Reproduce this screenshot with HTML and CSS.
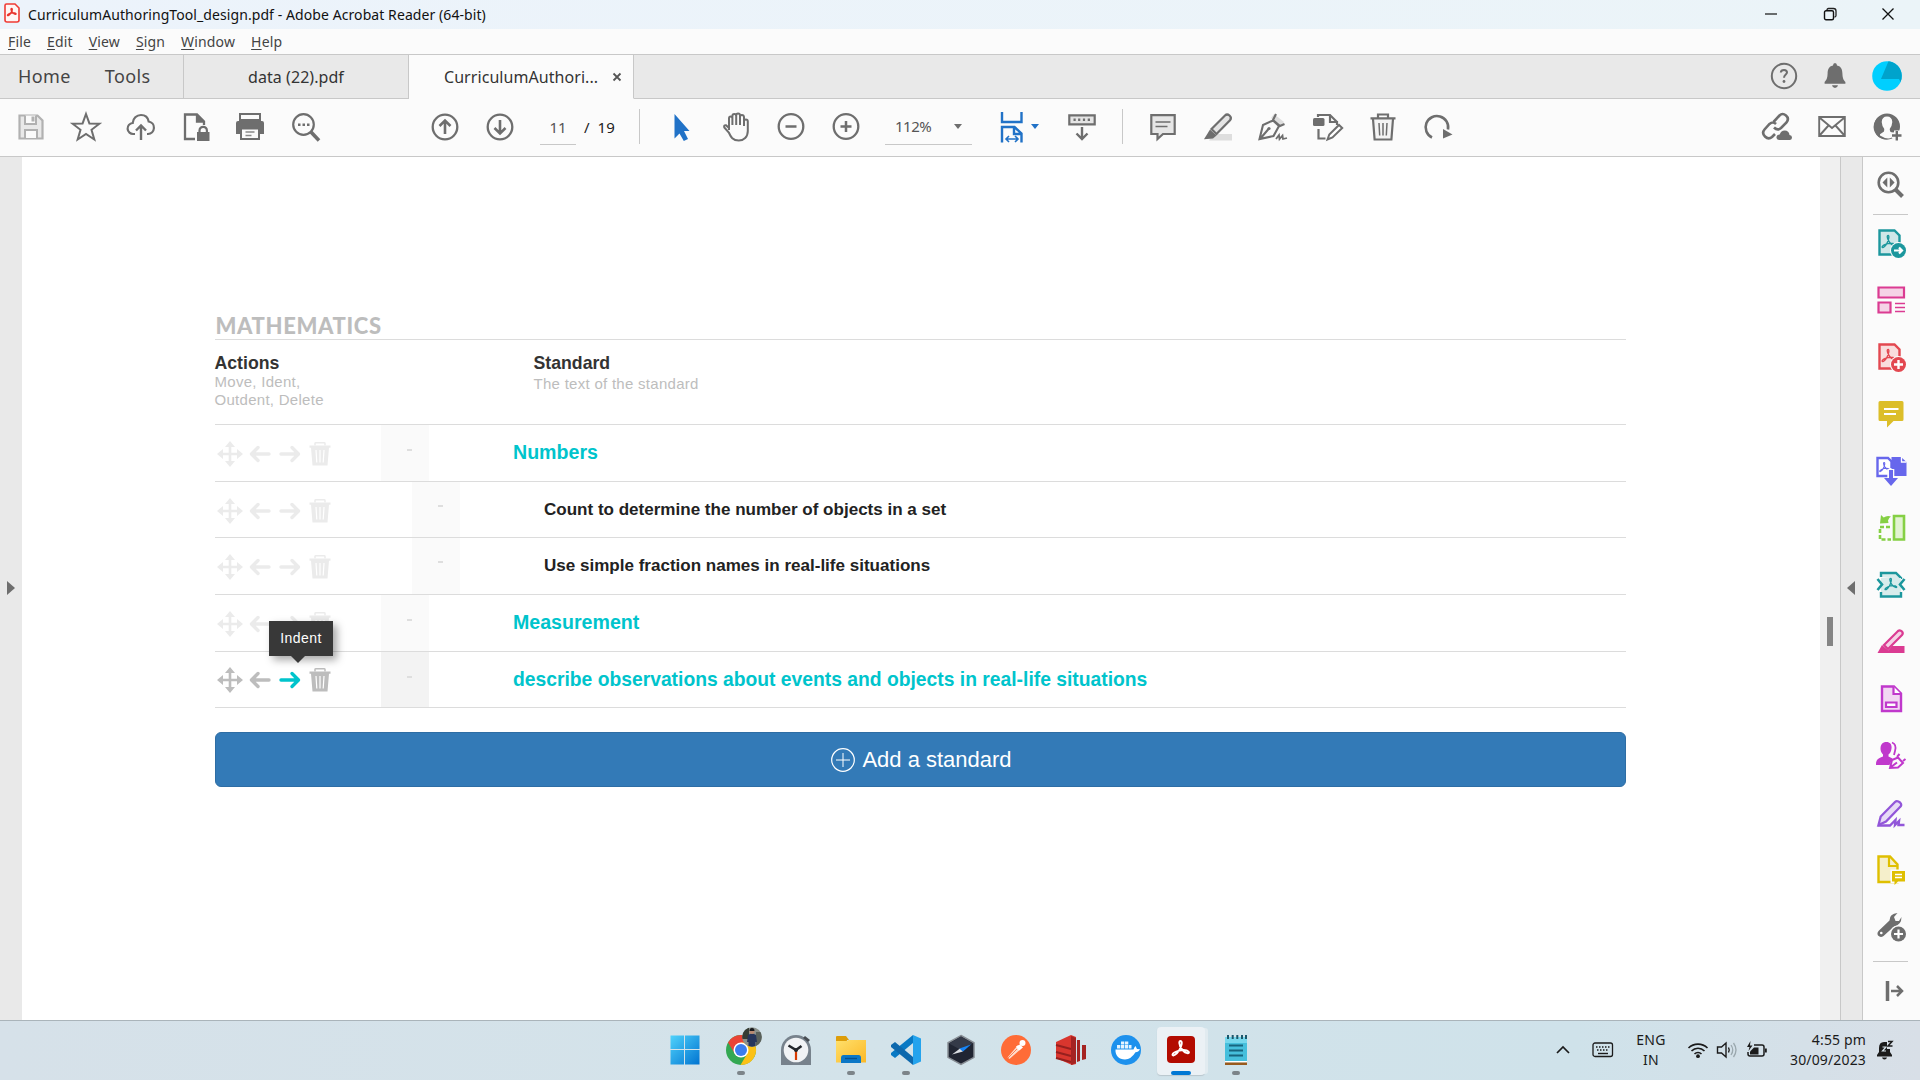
FILE: index.html
```html
<!DOCTYPE html>
<html lang="en">
<head>
    <meta charset="UTF-8">
    <meta name="viewport" content="width=device-width, initial-scale=1.0">
    <title>CurriculumAuthoringTool_design.pdf - Adobe Acrobat Reader (64-bit)</title>
    <link rel="stylesheet" href="styles.css">
</head>
<body>
    <!-- Shared shapes -->
    <svg class="defs" width="0" height="0">
        <defs>
            <symbol id="i-move" viewBox="0 0 26 26"><path d="M13 0l5 6h-3.7v5.7H20V8l6 5-6 5v-3.7h-5.7V20H18l-5 6-5-6h3.7v-5.7H6V18l-6-5 6-5v3.700h5.700V6H8z" fill="currentColor"/></symbol>
            <symbol id="i-left" viewBox="0 0 22 18"><path d="M20 9H3M9 2.500L2.500 9 9 15.500" fill="none" stroke="currentColor" stroke-width="3.400" stroke-linecap="round" stroke-linejoin="round"/></symbol>
            <symbol id="i-right" viewBox="0 0 22 18"><path d="M2 9h17M13 2.500L19.500 9 13 15.500" fill="none" stroke="currentColor" stroke-width="3.400" stroke-linecap="round" stroke-linejoin="round"/></symbol>
            <symbol id="i-bin" viewBox="0 0 22 24"><path d="M6 3.500V1.500Q6 .8 7 .8h8q1 0 1 .7v2" fill="none" stroke="currentColor" stroke-width="1.500"/><path d="M.5 3.500h21v2.300H20L18.500 23.500h-15L2 5.800H.5z" fill="currentColor"/><path d="M7 8l.8 12.500M11 8v12.500M15 8l-.8 12.500" stroke="#fff" stroke-width="1.200"/></symbol>
            <symbol id="i-pdf" viewBox="0 0 20 20"><path d="M9.500 3c2 0 .5 6-1.500 9.500-2 3.500-5 5.500-5.500 4.300C2 15 8 12 12.500 12c5 0 5.500 2.500 3.800 2.600C13 14.600 8.500 8 8.500 4.500Q8.500 3 9.500 3z" fill="none" stroke="currentColor" stroke-width="1.600"/></symbol>
        </defs>
    </svg>

    <!-- Title bar -->
    <div class="titlebar">
        <svg class="app-icon" width="16" height="20" viewBox="0 0 16 20"><path d="M2.500 1h8.500l4 4v12q0 2-2 2H3q-2 0-2-2V2.500Q1 1 2.500 1z" fill="#fff5f4" stroke="#ef3b35" stroke-width="1.600"/><path d="M7.500 5.500c1.500 0 .5 3-1 5s-2.500 2.500-3 1.800S6 9.800 9 9.800s3.800 1.400 2.500 1.500C10 11.500 7 8 7 6.300q0-.8.5-.8z" fill="none" stroke="#e8332d" stroke-width="1.400"/></svg>
        <span class="title-text">CurriculumAuthoringTool_design.pdf - Adobe Acrobat Reader (64-bit)</span>
        <div class="window-buttons">
            <svg width="14" height="14" viewBox="0 0 14 14"><path d="M1 7h12" stroke="#111" stroke-width="1.200"/></svg>
            <svg width="14" height="14" viewBox="0 0 14 14"><path d="M4 3.500V3q0-1.500 1.500-1.500h5q2.500 0 2.500 2.500v4.500q0 1.500-1.500 1.500" fill="none" stroke="#222" stroke-width="1.300"/><rect x="1.500" y="3.800" width="9" height="9" rx="1.500" fill="none" stroke="#111" stroke-width="1.400"/></svg>
            <svg width="14" height="14" viewBox="0 0 14 14"><path d="M1.500 1.500l11 11M12.500 1.500l-11 11" stroke="#111" stroke-width="1.300"/></svg>
        </div>
    </div>

    <!-- Menu bar -->
    <div class="menubar">
        <span><u>F</u>ile</span>
        <span><u>E</u>dit</span>
        <span><u>V</u>iew</span>
        <span><u>S</u>ign</span>
        <span><u>W</u>indow</span>
        <span><u>H</u>elp</span>
    </div>

    <!-- Tabs -->
    <div class="tabs">
        <div class="nav"><span class="home">Home</span><span class="tools">Tools</span></div>
        <div class="tab"><span class="tab-label">data (22).pdf</span></div>
        <div class="tab active">
            <span class="tab-label">CurriculumAuthori...</span>
            <svg class="tab-close" width="8" height="8" viewBox="0 0 8 8"><path d="M.5.5l7 7M7.500.5l-7 7" stroke="#555" stroke-width="1.800"/></svg>
        </div>
        <div class="account">
            <svg width="28" height="28" viewBox="0 0 28 28"><circle cx="14" cy="14" r="12.200" fill="none" stroke="#6e6e6e" stroke-width="2"/><path d="M10.800 10.500Q11 8 14 8t3 2.600c0 2-3 2.200-3 5.200" fill="none" stroke="#6e6e6e" stroke-width="2"/><circle cx="14" cy="19.500" r="1.400" fill="#6e6e6e"/></svg>
            <svg width="22" height="26" viewBox="0 0 22 26"><path d="M11 0q2 0 2 2.500c4.500 1 5.200 4 5.400 8 .2 5 1.200 6.500 3 8.500v1.700H.6V19c1.800-2 2.800-3.500 3-8.500.2-4 .9-7 5.400-8Q9 0 11 0zM8 22.300h6Q13.500 25 11 25t-3-2.700z" fill="#6e6e6e"/></svg>
            <svg width="30" height="30" viewBox="0 0 30 30"><circle cx="15" cy="15" r="14.800" fill="#00cfff"/><path d="M16.500.3A14.800 14.800 0 0 1 28.500 21L27 18H9z" fill="#00a3cc"/></svg>
        </div>
    </div>

    <!-- Toolbar -->
    <div class="toolbar">
        <div class="group file-tools">
            <svg viewBox="0 0 30 30"><path d="M3.500 3.500h18l5 5v18h-23z" fill="#e9e9e9" stroke="#b1b1b1" stroke-width="2.200"/><path d="M9 3.500v8.500h11V3.500M9 26v-8h12v8" fill="#fbfbfb" stroke="#b1b1b1" stroke-width="2"/><path d="M15.500 4.500h3v5h-3z" fill="#b1b1b1"/></svg>
            <svg viewBox="0 0 30 30"><path d="M15 2l3.400 9.400 10 .3-7.900 6.100 2.800 9.700L15 21.900l-8.300 5.600 2.800-9.700-7.900-6.100 10-.3z" fill="none" stroke="#6e6e6e" stroke-width="2"/></svg>
            <svg viewBox="0 0 30 30"><path d="M9 22H7.500a5.500 5.500 0 0 1-.8-11C7 6.500 10.500 3 15 3c4 0 7 2.600 7.700 6.500A6.300 6.300 0 0 1 22 22h-1" fill="none" stroke="#6e6e6e" stroke-width="2.200"/><path d="M15 28V14M10 18.500l5-5 5 5" fill="none" stroke="#6e6e6e" stroke-width="2.400"/></svg>
            <svg viewBox="0 0 30 30"><path d="M14 27H4V2.500h12l7 7V13M16 2.500v7h7" fill="none" stroke="#6e6e6e" stroke-width="2.300"/><path d="M16 2.500l7 7h-7z" fill="#6e6e6e"/><path d="M16 20h12.500v9H16z" fill="#6e6e6e"/><path d="M18.500 21v-2.500a3.700 3.700 0 0 1 7.400 0V21" fill="none" stroke="#6e6e6e" stroke-width="2.200"/></svg>
            <svg viewBox="1 0 30 30"><path d="M5 2h20v6H5z" fill="#fbfbfb" stroke="#6e6e6e" stroke-width="2"/><path d="M3 9h24q2 0 2 2v11h-4v-5H5v5H1V11q0-2 2-2z" fill="#6e6e6e"/><path d="M6 16.500h18V27H6z" fill="#fbfbfb" stroke="#6e6e6e" stroke-width="2"/><path d="M10.500 20h9M10.500 23.500h6" stroke="#8a8a8a" stroke-width="1.700"/></svg>
            <svg viewBox="0 0 30 30"><circle cx="12.500" cy="12.500" r="10.300" fill="none" stroke="#6e6e6e" stroke-width="2.200"/><path d="M20 20l8 8.500" stroke="#6e6e6e" stroke-width="3.600"/><path d="M7 11.500h2.500v2.500H7zM11.500 11.500H14v2.500h-2.500zM16 11.500h2.500v2.500H16z" fill="#6e6e6e"/></svg>
        </div>
        <div class="group page-tools">
            <svg viewBox="0 0 30 30"><circle cx="15" cy="15" r="12.300" fill="none" stroke="#6e6e6e" stroke-width="2.300"/><path d="M15 22V9M9.500 14L15 8.500l5.500 5.500" fill="none" stroke="#6e6e6e" stroke-width="2.600"/></svg>
            <svg viewBox="0 0 30 30"><circle cx="15" cy="15" r="12.300" fill="none" stroke="#6e6e6e" stroke-width="2.300"/><path d="M15 8v13M9.500 16l5.500 5.500 5.500-5.500" fill="none" stroke="#6e6e6e" stroke-width="2.600"/></svg>
        </div>
        <div class="page-number"><span class="current">11</span><span class="slash">/</span><span>19</span></div>
        <div class="divider"></div>
        <div class="group view-tools">
            <svg viewBox="0 0 30 30"><path d="M8.500 2v24.500l5-5 4.300 7.500 4.200-2-4-8h5.500z" fill="#2172c7"/></svg>
            <svg viewBox="0 0 30 30"><path d="M8 18V6.500q0-2 1.700-2t1.700 2V13 4q0-2 1.900-2t1.900 2v9V3.500q0-2 1.900-2t1.900 2V13 5q0-2 1.900-2T23 5v9-4.500q0-2 1.900-2t1.900 2V19c0 6-4 9.500-9 9.500-6 0-8-3.500-10-8l-4.500-5Q2.500 13 5 13.200L8 16" fill="none" stroke="#6e6e6e" stroke-width="2"/></svg>
            <svg viewBox="0 0 30 30"><circle cx="15" cy="14.500" r="12.300" fill="none" stroke="#6e6e6e" stroke-width="2.300"/><path d="M9.500 14.500h11" stroke="#6e6e6e" stroke-width="2.500"/></svg>
            <svg viewBox="0 0 30 30"><circle cx="15" cy="14.500" r="12.300" fill="none" stroke="#6e6e6e" stroke-width="2.300"/><path d="M9.500 14.500h11M15 9v11" stroke="#6e6e6e" stroke-width="2.500"/></svg>
        </div>
        <div class="zoom-field"><span>112%</span><i class="caret"></i></div>
        <div class="fit-tool">
            <svg width="24" height="32" viewBox="0 0 24 32"><path d="M2 1v10h19.500V1" fill="none" stroke="#2172c7" stroke-width="2.400"/><path d="M2 31.500V16h12.500l7 6.500v9M14 16v7h8" fill="none" stroke="#2172c7" stroke-width="2.400"/><path d="M7 28h10M9 25L6 28l3 3M15 25l3 3-3 3" fill="none" stroke="#2172c7" stroke-width="1.600"/></svg>
            <i class="caret blue"></i>
        </div>
        <svg class="read-mode" width="30" height="30" viewBox="0 0 30 30"><path d="M2.300 3.300h25.400v9H2.300z" fill="#e4e4e4" stroke="#6e6e6e" stroke-width="2.200"/><path d="M6.500 7.800h2.200m2.400 0h2.200m2.600 0h2.200m2.600 0H23M15 15v11.500M9.500 21.500L15 27l5.500-5.500" fill="none" stroke="#6e6e6e" stroke-width="2.400"/></svg>
        <div class="divider second"></div>
        <div class="group edit-tools">
            <svg viewBox="0 0 30 30"><path d="M3.300 3.200h23.400V22H15l-5.500 5v-5H3.300z" fill="#e6e6e6" stroke="#6e6e6e" stroke-width="2.200"/><path d="M7.500 10h15M7.500 14.500h12" stroke="#6e6e6e" stroke-width="1.500"/></svg>
            <svg viewBox="0 0 30 30"><path d="M10 22h19v6.500H6z" fill="#dedede"/><path d="M8.500 17L22 3.500q2-2 4.500 0 2.500 2.300.5 4.700L13.500 22z" fill="#e4e4e4" stroke="#6e6e6e" stroke-width="2.200"/><path d="M7 17.500l6.500 6-3.500 3-9 .7z" fill="#6e6e6e"/></svg>
            <svg viewBox="0 0 30 30"><path d="M16 2l10 8-3 4-10-8z" fill="#dedede"/><path d="M18 2l-3 6 7 6 4.500-2M15 8.500L5 13 1.500 27l14-3 5.500-10zM2 27l8.500-10" fill="none" stroke="#6e6e6e" stroke-width="2.100"/><circle cx="11" cy="16.500" r="1.600" fill="#6e6e6e"/><path d="M18 27l3-4 .5 4 3-3.500.5 3.500 4-1" fill="none" stroke="#6e6e6e" stroke-width="1.800"/></svg>
            <svg viewBox="0 0 30 30"><path d="M5 5V3h12l7 7M17 3v7h7v3M5.500 17v9.500h7" fill="none" stroke="#6e6e6e" stroke-width="2.200"/><rect x="0" y="6" width="11.500" height="8" rx="1.500" fill="#6e6e6e"/><path d="M14.500 27.500l1.800-5L26 13l3.200 3-9.700 9.500z" fill="#fff" stroke="#6e6e6e" stroke-width="2"/></svg>
            <svg viewBox="0 0 30 30"><path d="M5 7l1.600 20.500h16.800L25 7" fill="#f4f4f4" stroke="#6e6e6e" stroke-width="2.200"/><path d="M2.500 6.300h25M10 6V2.500h10V6" fill="none" stroke="#6e6e6e" stroke-width="2.200"/><path d="M11 11l.7 12.500M15 11v12.500M19 11l-.7 12.500" stroke="#6e6e6e" stroke-width="1.500"/></svg>
            <svg viewBox="0 0 30 30"><path d="M9 25.500A11.300 11.300 0 1 1 25 17.500" fill="none" stroke="#6e6e6e" stroke-width="2.600"/><path d="M20 17l9.500 5.500-9.500 4z" fill="#6e6e6e"/></svg>
        </div>
        <div class="group share-tools">
            <svg viewBox="0 0 30 30"><path d="M11.500 10l6-6.500q3-3 6.500 0t.5 7L19 16q-3.500 3-7-.5M14 12q-3-3-6.500 0l-5 5.500q-3 3.500.5 7t7 .5l3-3" fill="none" stroke="#6e6e6e" stroke-width="2.600"/><path d="M17 28q-3-.5-2.500-3.200.5-2.300 3.200-2.300 1.300-4 5-4 4.300 0 4.800 4.500 2.500.3 2.500 2.600T28 28z" fill="#6e6e6e"/></svg>
            <svg viewBox="0 0 30 30"><path d="M2.200 5h25.600v19H2.200zM3 6l12 10L27 6M3 23l8.500-9.500M27 23l-8.500-9.500" fill="none" stroke="#6e6e6e" stroke-width="1.900"/></svg>
            <svg viewBox="0 0 30 30"><circle cx="15" cy="14.500" r="12" fill="none" stroke="#6e6e6e" stroke-width="2"/><path d="M15 2.500a12.500 12.500 0 1 0 5 23.500l-1-4 5-2.500 3-2A12.500 12.500 0 0 0 15 2.500z" fill="#6e6e6e"/><path d="M15 4.500q5 0 5.300 5.500-.3 4.500-2.600 7l.4 2.500 3.900 2L20 25.500q-5 2.500-12-2v-1.200l4-2.800.3-2.500Q10 14.500 9.700 10 10 4.500 15 4.500z" fill="#fbfbfb"/><path d="M20 23.500h10M25 18.500v10" stroke="#fbfbfb" stroke-width="6"/><path d="M20 23.500h9.500M24.800 19v9.500" stroke="#6e6e6e" stroke-width="2.400"/></svg>
        </div>
    </div>

    <!-- Document area -->
    <div class="workspace">
        <div class="left-strip"><i class="tri-right"></i></div>
        <div class="page">
            <div class="standards">
                <h1>MATHEMATICS</h1>
                <div class="head">
                    <div class="head-actions">
                        <h2>Actions</h2>
                        <p>Move, Ident,<br>Outdent, Delete</p>
                    </div>
                    <div class="head-standard">
                        <h2>Standard</h2>
                        <p>The text of the standard</p>
                    </div>
                </div>
                <div class="row">
                    <div class="actions"><svg class="move"><use href="#i-move"/></svg><svg class="arrow"><use href="#i-left"/></svg><svg class="arrow"><use href="#i-right"/></svg><svg class="bin"><use href="#i-bin"/></svg></div>
                    <div class="handle"><i></i></div>
                    <div class="text section">Numbers</div>
                </div>
                <div class="row child">
                    <div class="actions"><svg class="move"><use href="#i-move"/></svg><svg class="arrow"><use href="#i-left"/></svg><svg class="arrow"><use href="#i-right"/></svg><svg class="bin"><use href="#i-bin"/></svg></div>
                    <div class="handle"><i></i></div>
                    <div class="text">Count to determine the number of objects in a set</div>
                </div>
                <div class="row child">
                    <div class="actions"><svg class="move"><use href="#i-move"/></svg><svg class="arrow"><use href="#i-left"/></svg><svg class="arrow"><use href="#i-right"/></svg><svg class="bin"><use href="#i-bin"/></svg></div>
                    <div class="handle"><i></i></div>
                    <div class="text">Use simple fraction names in real-life situations</div>
                </div>
                <div class="row">
                    <div class="actions"><svg class="move"><use href="#i-move"/></svg><svg class="arrow"><use href="#i-left"/></svg><svg class="arrow"><use href="#i-right"/></svg><svg class="bin"><use href="#i-bin"/></svg></div>
                    <div class="handle"><i></i></div>
                    <div class="text section">Measurement</div>
                </div>
                <div class="row hovered">
                    <div class="actions"><svg class="move"><use href="#i-move"/></svg><svg class="arrow"><use href="#i-left"/></svg><svg class="arrow on"><use href="#i-right"/></svg><svg class="bin"><use href="#i-bin"/></svg><span class="tooltip">Indent</span></div>
                    <div class="handle"><i></i></div>
                    <div class="text">describe observations about events and objects in real-life situations</div>
                </div>
                <div class="add-button">
                    <svg width="24" height="24" viewBox="0 0 24 24"><circle cx="12" cy="12" r="11.300" fill="none" stroke="#fff" stroke-width="1.200"/><path d="M12 5v14M5 12h14" stroke="#fff" stroke-width="1"/></svg>
                    <span>Add a standard</span>
                </div>
            </div>
        </div>
        <div class="scrollbar"><div class="thumb"></div></div>
        <div class="right-strip"><i class="tri-left"></i></div>
        <div class="tool-pane">
            <svg viewBox="0 0 30 30"><circle cx="12.500" cy="12.500" r="9.800" fill="none" stroke="#6e6e6e" stroke-width="2.600"/><path d="M19.500 19.500l7 7" stroke="#6e6e6e" stroke-width="4"/><path d="M11.300 7.500v10l-4.800-5zM13.800 7.500v10l4.800-5z" fill="#6e6e6e"/></svg>
            <div class="pane-line"></div>
            <svg viewBox="0 0 30 30" class="teal"><path d="M3.500 2.500h15l5 5v19h-20z" fill="#cfe7e8" stroke="currentColor" stroke-width="2.400"/><use href="#i-pdf" x="4" y="5" width="17" height="17"/><circle cx="22.500" cy="22.500" r="8.500" fill="#fbfbfb"/><circle cx="22.500" cy="22.500" r="7.500" fill="currentColor"/><path d="M18 22.500h8M23 19.500l3 3-3 3" fill="none" stroke="#fff" stroke-width="2.200"/></svg>
            <svg viewBox="0 0 30 30" class="pink"><path d="M2.500 2.500h25.500v10H2.500zM2.500 17.500h12v10h-12z" fill="#f5d3e6" stroke="currentColor" stroke-width="2.200"/><path d="M19 18.500h10M19 22.500h10M19 26.500h10" stroke="currentColor" stroke-width="1.400"/></svg>
            <svg viewBox="0 0 30 30" class="red"><path d="M3.500 2.500h15l5 5v19h-20z" fill="#f9dddd" stroke="currentColor" stroke-width="2.400"/><use href="#i-pdf" x="4" y="5" width="17" height="17"/><circle cx="22.500" cy="22.500" r="8.500" fill="#fbfbfb"/><circle cx="22.500" cy="22.500" r="7.500" fill="currentColor"/><path d="M18 22.500h9M22.500 18v9" stroke="#fff" stroke-width="2.400"/></svg>
            <svg viewBox="0 0 30 30"><path d="M4 2h22q1.500 0 1.500 1.500v17Q27.500 22 26 22h-8.500L11 28.500V22H4q-1.500 0-1.500-1.500v-17Q2.500 2 4 2z" fill="#dcbe29"/><path d="M8 10h14.500M8 15h12" stroke="#fff" stroke-width="2"/></svg>
            <svg viewBox="0 0 30 30" class="indigo"><path d="M12 20H1.500V2H12l3.500 3.500V12" fill="#fff" stroke="currentColor" stroke-width="2.400"/><path d="M15.500 1H25l5.500 5v14H15.500z" fill="currentColor"/><path d="M25.500 1v5h5" stroke="#fff" stroke-width="1.300" fill="none"/><use href="#i-pdf" x="2" y="4" width="13" height="14"/><path d="M14.800 13v11" stroke="#fbfbfb" stroke-width="7"/><path d="M13 14h4v8h5l-7 8-7-8h5z" fill="currentColor"/></svg>
            <svg viewBox="0 0 30 30" class="green"><path d="M18 3h10v23.500H18z" fill="#e2f3d2" stroke="currentColor" stroke-width="2.600"/><path d="M14 14H4v12.500h11" fill="none" stroke="currentColor" stroke-width="2.600" stroke-dasharray="4 2"/><path d="M4 10.500l1-8.500 2.700 2.500Q11 2 15 3.500q-2 1-3 4L12.500 10z" fill="currentColor"/></svg>
            <svg viewBox="0 0 30 30" class="teal"><path d="M5 7V3h15l5 5v1M5 22v4.500h20V22" fill="#d8ecec" stroke="currentColor" stroke-width="2.400"/><path d="M5 8h20v14H5z" fill="#d8ecec"/><path d="M1.500 9L6 14.500 1.500 20M28.500 9L24 14.500l4.500 5.500" fill="none" stroke="currentColor" stroke-width="2.600"/><use href="#i-pdf" x="7" y="6" width="16" height="16"/></svg>
            <svg viewBox="0 0 30 30" class="pink"><path d="M16 19h12.500v7H10z" fill="currentColor"/><path d="M8 18L22 4q2-1.500 4 .5 1.500 1.700 0 3.500L12 22z" fill="#f5d3e6" stroke="currentColor" stroke-width="2.200"/><path d="M6 18l7 6-2 2H1.500z" fill="currentColor"/></svg>
            <svg viewBox="0 0 30 30" class="magenta"><path d="M6 2.500h12l7 7V27H6z" fill="#f2d6f3" stroke="currentColor" stroke-width="2.400"/><path d="M17.500 2.500V10H25M10 18.500h10.500v4.500H10z" fill="#fff" stroke="currentColor" stroke-width="2.200"/></svg>
            <svg viewBox="0 0 30 30" class="magenta"><path d="M16 1.500q5 2 3 8.500l-1 4" fill="none" stroke="currentColor" stroke-width="1.800"/><path d="M10.500 1c4 0 5.500 3 5 6.500-.3 3-1.500 5-3 6v2l4 2-3 6.500H0c0-5 1-6 7-8.500v-2c-2-2-2.500-4-2.500-6C4.500 3.500 6.500 1 10.500 1z" fill="currentColor"/><path d="M14 27l2-8 6-2.500 5 5.500-5 4.500zM21 16l2.500-3M15 26l6-4.500M27 20l2.500-2" fill="#fbfbfb" stroke="currentColor" stroke-width="2"/></svg>
            <svg viewBox="0 0 30 30" class="violet"><path d="M2.500 27l2.200-8.500L19 4q2-2 5 .5 2.500 2.500 0 4.500L10 23.500z" fill="#e7daf6" stroke="currentColor" stroke-width="2.300"/><path d="M2 27.500h12l5.500-5.500-.5 5 4-4-.5 4h6" fill="none" stroke="currentColor" stroke-width="2.400"/></svg>
            <svg viewBox="0 0 30 30" class="gold"><path d="M2.500 1.500H14l7.500 8V27h-19z" fill="#f5efcb" stroke="currentColor" stroke-width="2.400"/><path d="M13 2v9h8" fill="none" stroke="currentColor" stroke-width="2.200"/><path d="M14.500 14.500H30V28H14.500z" fill="#fbfbfb"/><path d="M16 16h13v10.500h-7L18.500 30v-3.500H16z" fill="currentColor"/><path d="M19 19.500h7M19 22.500h7" stroke="#fff" stroke-width="1.400"/></svg>
            <svg viewBox="0 0 30 30"><path d="M13.500 8.500q0-7 8-7.500L18 5l1.500 4h3.500l2.500-4q0 8-7.500 9.500L7.500 24q-3 2-5.500-.5-1.500-2.500 1-5z" fill="#6e6e6e"/><circle cx="5.300" cy="21" r="1.300" fill="#fff"/><circle cx="22.500" cy="22" r="8.700" fill="#fbfbfb"/><circle cx="22.500" cy="22" r="7.500" fill="#6e6e6e"/><path d="M18 22h9M22.500 17.500v9" stroke="#fff" stroke-width="2.200"/></svg>
            <div class="pane-line last"></div>
            <svg viewBox="0 0 30 30" class="expand"><path d="M11.500 5v20" stroke="#6e6e6e" stroke-width="3.500"/><path d="M15 15h11M21 10l5 5-5 5" fill="none" stroke="#6e6e6e" stroke-width="2.500"/></svg>
        </div>
    </div>

    <!-- Taskbar -->
    <div class="taskbar">
        <div class="apps">
            <div class="app">
                <svg viewBox="0 0 32 32"><defs><linearGradient id="win" x1="0" y1="0" x2="1" y2="1"><stop offset="0" stop-color="#4fd2fb"/><stop offset="1" stop-color="#0174d1"/></linearGradient></defs><path d="M1.500 1.500H15V15H1.500zM16 1.500h14.500V15H16zM1.500 16H15v14.500H1.500zM16 16h14.500v14.500H16z" fill="url(#win)"/></svg>
            </div>
            <div class="app open">
                <svg viewBox="0 0 32 32"><circle cx="16" cy="16" r="15" fill="#33a852"/><path d="M3 8.500a15 15 0 0 1 26 0L16 16z" fill="#ea4335"/><path d="M3 8.500L10 20l6-4V8.500z" fill="#ea4335"/><path d="M16 8.500h13A15 15 0 0 1 15.500 31L22 20z" fill="#fbc116"/><circle cx="16" cy="16" r="7.500" fill="#fff"/><circle cx="16" cy="16" r="6" fill="#3b7ded"/></svg>
                <svg class="profile" viewBox="0 0 20 20"><clipPath id="pc"><circle cx="10" cy="10" r="9.800"/></clipPath><g clip-path="url(#pc)"><path d="M0 0h20v20H0z" fill="#8b918b"/><path d="M0 0h7v12H0z" fill="#353d35"/><path d="M14 5h6v15h-6z" fill="#59615b"/><path d="M6 8q4-3 8 0l1 7H5zM6.500 14h7v6h-7z" fill="#26365c"/><circle cx="10" cy="4.500" r="2.500" fill="#b98970"/><path d="M7.500 4q0-3 2.500-3t2.500 3z" fill="#181a1e"/></g></svg>
            </div>
            <div class="app">
                <svg viewBox="0 0 32 32"><path d="M1 16a15 15 0 0 1 30 0v15H1z" fill="#77828c"/><path d="M25 2l5 4-2 2-5-4z" fill="#474c52"/><circle cx="16" cy="16" r="12.300" fill="#f1f3f5"/><path d="M16 16v10" stroke="#d83b01" stroke-width="2.200"/><path d="M8.500 11.500L16 16l5.500-4" fill="none" stroke="#22262b" stroke-width="2.600"/><circle cx="16" cy="16" r="2" fill="#22262b"/></svg>
            </div>
            <div class="app open">
                <svg viewBox="0 0 32 32"><defs><linearGradient id="fold" x1="0" y1="0" x2="1" y2="1"><stop offset="0" stop-color="#ffe06c"/><stop offset="1" stop-color="#fbb826"/></linearGradient></defs><path d="M1 3q0-1 1-1h9l3 4h-2v6H1z" fill="#dd9d0a"/><path d="M1 7h10l3-1h17v22.500H1z" fill="url(#fold)"/><path d="M6 29v-5q0-3 2.500-3h15q2.500 0 2.500 3v5z" fill="#0c77c6"/><path d="M10 24.500h12" stroke="#06508f" stroke-width="1.400"/></svg>
            </div>
            <div class="app open">
                <svg viewBox="0 0 32 32"><path d="M23 1v8L5 24l-4-3v-2z" fill="#0879c4"/><path d="M23 31v-8L5 8l-4 3v2z" fill="#0d68ad"/><path d="M23 1l8 3.500v23L23 31z" fill="#24a3ed"/></svg>
            </div>
            <div class="app">
                <svg viewBox="0 0 32 32"><path d="M16 1.500l13 7.300v14.600L16 30.500 3 23.400V8.800z" fill="#202532" stroke="#888e95" stroke-width="1.500"/><path d="M16 2.500l12 7L16 16 4 9.500z" fill="#343a48"/><path d="M7 20.500l8-6 3 3z" fill="#d9dde2"/><path d="M14.500 14.500L26 10.500l-8 7z" fill="#1685f7"/></svg>
            </div>
            <div class="app">
                <svg viewBox="0 0 32 32"><circle cx="16" cy="16" r="15" fill="#ff6c37"/><path d="M7.500 23.500L18 11l3.500 3.500L9.500 25z" fill="#ffdccd"/><path d="M8 24l9-9" stroke="#ff6c37" stroke-width=".8"/><circle cx="22.500" cy="9" r="3" fill="#fff"/><path d="M16 12.500l4-2 3 3-4 3z" fill="#fff"/></svg>
            </div>
            <div class="app">
                <svg viewBox="0 0 32 32"><path d="M1 8l15-7 5 2v27l-4 1-16-7z" fill="#d9362e"/><path d="M1 11l15 4M1 18l15 4M1 24l15 4" stroke="#96201e" stroke-width="2"/><path d="M16 2v29l5-2V4zM22 6h3v21l-3 1zM27 11h4v14l-4 1z" fill="#a52422"/></svg>
            </div>
            <div class="app">
                <svg viewBox="0 0 32 32"><circle cx="16" cy="16" r="15" fill="#1d91ed"/><path d="M5.500 15.500h18q1-3 2-3.500l1.500 3 3 .3q-1.500 3-4.500 3Q21 25.500 15 25.500c-6 0-10-4-9.500-10z" fill="#fff"/><path d="M7 11h3.300v3.500H7zM11 11h3.300v3.500H11zM15 11h3.300v3.500H15zM19 11h2.500v3.500H19zM11 7.500h3.300v3H11zM15 7.500h3.300v3H15z" fill="#e5f4ff"/></svg>
            </div>
            <div class="app current">
                <svg viewBox="0 0 32 32"><rect x="2" y="2" width="28" height="27" rx="4" fill="#b30b00"/><path d="M15.500 7c2.500 0 1 6-1.500 9.500-2.500 4-6 6-6.500 4.500C7 19 13 16 18.500 16s6.500 3 4.500 3.200C19 19.500 14.500 13 14.300 9q0-2 1.200-2z" fill="none" stroke="#fff" stroke-width="1.900"/></svg>
            </div>
            <div class="app open">
                <svg viewBox="0 0 32 32"><path d="M5 3h22v24H5z" fill="#46bfdc"/><path d="M5 3h22v6H5z" fill="#77d8ed"/><path d="M9 11.500h14M9 16.500h14M9 21.500h14" stroke="#17657f" stroke-width="1.900"/><path d="M8 1v4M12.700 1v4M17.300 1v4M22 1v4M26 1v4" stroke="#1c586c" stroke-width="2"/><path d="M5 27h22v1.500H5z" fill="#fff"/><path d="M5 28.500h22V31H5z" fill="#985a1d"/></svg>
            </div>
        </div>
        <div class="tray">
            <svg class="chevron" width="16" height="10" viewBox="0 0 16 10"><path d="M2 8l6-6 6 6" fill="none" stroke="#1b1b1b" stroke-width="1.700"/></svg>
            <svg class="keyboard" width="22" height="16" viewBox="0 0 22 16"><rect x="1" y="1" width="19.500" height="13.500" rx="2" fill="none" stroke="#1b1b1b" stroke-width="1.300"/><path d="M4 5h14M5 8h12" stroke="#1b1b1b" stroke-width="1.500" stroke-dasharray="1.500 1.500"/><path d="M6 11.500h10" stroke="#1b1b1b" stroke-width="1.400"/></svg>
            <div class="lang">ENG<br>IN</div>
            <svg class="wifi" width="22" height="18" viewBox="0 0 22 18"><path d="M1.500 7a13.500 13.500 0 0 1 19 0M4.500 10a9 9 0 0 1 13 0M7.500 13a5 5 0 0 1 7 0" fill="none" stroke="#1b1b1b" stroke-width="1.600"/><circle cx="11" cy="15.200" r="1.900" fill="#1b1b1b"/></svg>
            <svg class="volume" width="22" height="18" viewBox="0 0 22 18"><path d="M1.500 6h4L10 2v14l-4.500-4h-4z" fill="none" stroke="#1b1b1b" stroke-width="1.400"/><path d="M12.500 6.500q1.500 2.500 0 5" fill="none" stroke="#1b1b1b" stroke-width="1.400"/><path d="M15 4q3.500 5 0 10M17.500 2q5 7 0 14" fill="none" stroke="#9ba8ae" stroke-width="1.300"/></svg>
            <svg class="battery" width="22" height="18" viewBox="0 0 22 18"><path d="M8 4h8q2 0 2 2v7q0 2-2 2H4q-2 0-2-2v-2" fill="none" stroke="#1b1b1b" stroke-width="1.500"/><path d="M19 7.500h1.800v4H19z" fill="#1b1b1b"/><path d="M8 6.500h4.500v7H4v-3z" fill="#1b1b1b"/><path d="M4.500 0L1 6h2.500L2.500 10l4-5.500H4z" fill="#1b1b1b"/></svg>
            <div class="clock">4:55 pm<br>30/09/2023</div>
            <svg class="bell" width="18" height="20" viewBox="0 0 18 20"><path d="M8 2Q3 2 3 8v4l-2 3v1.500h15V15l-2-3V9h-3V2zM6 17.500h5Q10.500 19.500 8.500 19.500T6 17.500z" fill="#1b1b1b"/><path d="M6.500 7h3.500l-3.500 4H10" stroke="#d5e1e8" stroke-width="1.200" fill="none"/><path d="M12 1.500h4l-4 4.500h4.500" stroke="#1b1b1b" stroke-width="1.500" fill="none"/></svg>
        </div>
    </div>
</body>
</html>
```
FILE: styles.css
```css
:root {
    --chrome: #fbfbfb;
    --strip: #e9e9e9;
    --line: #c8c8c8;
    --icon: #6e6e6e;
    --cyan: #00c4cc;
    --ui-font: "Noto Sans", "Open Sans", sans-serif;
    --doc-font: "Liberation Sans", Arial, sans-serif;
}

* {
    box-sizing: border-box;
}

body {
    margin: 0;
    width: 1920px;
    height: 1080px;
    overflow: hidden;
    display: flex;
    flex-direction: column;
    font-family: var(--ui-font);
    background: #fff;
}

svg {
    display: block;
    flex-shrink: 0;
    overflow: visible;
}

.defs {
    position: absolute;
}

/* Title bar */
.titlebar {
    height: 29px;
    display: flex;
    align-items: center;
    padding-left: 4px;
    padding-bottom: 1px;
    background: linear-gradient(90deg, #ecf3fb, #ebf4f8);
}

.app-icon {
    margin-top: -2px;
}

.title-text {
    margin-left: 8px;
    font-size: 14px;
    letter-spacing: 0.08px;
    color: #111;
    white-space: nowrap;
}

.window-buttons {
    margin-left: auto;
    padding-right: 25px;
    display: flex;
    gap: 44.5px;
}

/* Menu */
.menubar {
    height: 26px;
    display: flex;
    align-items: center;
    gap: 16px;
    padding-left: 8px;
    background: var(--chrome);
    border-bottom: 1px solid var(--line);
    font-size: 14px;
    letter-spacing: 0.15px;
    color: #444;
}

.menubar u {
    text-underline-offset: 2px;
}

/* Tabs */
.tabs {
    height: 44px;
    display: flex;
    background: var(--strip);
    color: #444;
}

.nav {
    width: 184px;
    padding-left: 18px;
    padding-bottom: 2px;
    display: flex;
    align-items: center;
    gap: 34px;
    font-size: 18px;
    letter-spacing: 0.4px;
    border-right: 1px solid var(--line);
    border-bottom: 1px solid var(--line);
}

.tab {
    width: 225px;
    display: flex;
    align-items: center;
    justify-content: center;
    font-size: 16px;
    letter-spacing: 0.06px;
    color: #333;
    border-right: 1px solid var(--line);
    border-bottom: 1px solid var(--line);
}

.tab.active {
    background: var(--chrome);
    border-bottom-color: var(--chrome);
    justify-content: flex-start;
    padding-left: 35px;
}

.tab-close {
    margin-left: auto;
    margin-right: 12px;
}

.account {
    flex: 1;
    display: flex;
    align-items: center;
    justify-content: flex-end;
    padding-right: 18px;
    padding-bottom: 1px;
    border-bottom: 1px solid var(--line);
}

.account svg:nth-child(2) {
    margin: 0 26px;
}

/* Toolbar */
.toolbar {
    height: 58px;
    display: flex;
    align-items: center;
    padding-bottom: 2px;
    background: var(--chrome);
    border-bottom: 1px solid var(--line);
    font-size: 15px;
}

.group {
    display: flex;
    gap: 25px;
}

.group svg {
    width: 30px;
    height: 30px;
}

.file-tools {
    margin-left: 16px;
}

.page-tools {
    margin-left: 109px;
}

.page-number {
    display: flex;
    align-items: center;
    margin-left: 25px;
    width: 99px;
    color: #222;
}

.page-number .current {
    width: 36px;
    height: 36px;
    line-height: 36px;
    text-align: center;
    color: #555;
    border-bottom: 1px solid var(--line);
}

.slash {
    margin: 0 8px 0 8px;
}

.divider {
    width: 1px;
    height: 35px;
    background: var(--line);
}

.view-tools {
    margin-left: 26px;
}

.zoom-field {
    margin-left: 24px;
    width: 87px;
    height: 36px;
    padding: 0 10px 0 10px;
    display: flex;
    align-items: center;
    justify-content: space-between;
    color: #555;
    font-size: 15px;
    letter-spacing: -0.5px;
    border-bottom: 1px solid var(--line);
}

.caret {
    border: 4px solid transparent;
    border-top: 5px solid var(--icon);
    border-bottom: 0;
}

.caret.blue {
    border-top-color: #2172c7;
}

.fit-tool {
    display: flex;
    align-items: center;
    gap: 7px;
    margin-left: 28px;
}

.read-mode {
    margin-left: 28px;
}

.divider.second {
    margin-left: 25px;
}

.edit-tools {
    margin-left: 25px;
}

.share-tools {
    margin-left: auto;
    margin-right: 18px;
}

/* Workspace */
.workspace {
    height: 863px;
    display: flex;
}

.left-strip {
    width: 22px;
    display: flex;
    align-items: center;
    padding-left: 7px;
    padding-bottom: 2px;
    background: var(--strip);
}

.tri-right {
    border: 7px solid transparent;
    border-left: 8px solid var(--icon);
    border-right: 0;
}

.tri-left {
    border: 7px solid transparent;
    border-right: 8px solid var(--icon);
    border-left: 0;
}

.page {
    flex: 1;
    padding: 156px 194px 0 192.5px;
    background: #fff;
    font-family: var(--doc-font);
}

h1 {
    margin: 0;
    height: 27px;
    padding-left: 1px;
    font: 900 22px/26px Lato, sans-serif;
    letter-spacing: 0.65px;
    color: #bdbdbd;
    border-bottom: 1px solid #dcdcdc;
}

h2 {
    margin: 0;
    font-size: 17.7px;
    line-height: 20px;
    color: #333;
}

.head {
    height: 85px;
    display: flex;
    padding-top: 13px;
    border-bottom: 1px solid #dcdcdc;
}

.head p {
    margin: 0;
    font-size: 15px;
    line-height: 18px;
    letter-spacing: 0.28px;
    color: #bdbdbd;
}

.head-actions {
    width: 319px;
}

.head-standard p {
    margin-top: 2px;
}

.row {
    height: 56.7px;
    display: flex;
    border-bottom: 1px solid #dcdcdc;
}

.actions {
    width: 166.5px;
    padding-left: 2.5px;
    padding-top: 2px;
    display: flex;
    align-items: center;
    color: #ebebeb;
    position: relative;
}

.move {
    width: 26px;
    height: 26px;
    margin-right: 6px;
}

.arrow {
    width: 22px;
    height: 18px;
    margin-right: 8px;
}

.bin {
    width: 22px;
    height: 24px;
}

.handle {
    width: 48px;
    padding: 24px 0 0 26px;
    background: #fafafa;
}

.handle i {
    display: block;
    width: 5px;
    height: 2px;
    background: #dedede;
}

.text {
    padding-left: 84px;
    line-height: 55px;
    font-size: 19.3px;
    font-weight: bold;
    color: var(--cyan);
    white-space: nowrap;
}

.text.section {
    font-size: 19.6px;
}

.child .handle {
    margin-left: 31px;
    padding-top: 23px;
}

.child .text {
    font-size: 17.05px;
    color: #222;
}

.hovered .actions {
    padding-top: 0;
    color: #bdbdbd;
}

.hovered .handle {
    background: #f3f3f3;
}

.arrow.on {
    color: var(--cyan);
}

.tooltip {
    position: absolute;
    left: 54.5px;
    top: -31px;
    width: 64px;
    height: 35px;
    font-size: 14px;
    letter-spacing: 0.45px;
    line-height: 34px;
    text-align: center;
    color: #fff;
    background: #383838;
    box-shadow: 4px 4px 8px rgba(0, 0, 0, 0.35);
}

.tooltip::after {
    content: "";
    position: absolute;
    left: 22px;
    top: 35px;
    border: 7px solid transparent;
    border-top-color: #383838;
    border-bottom: 0;
}

.add-button {
    height: 55px;
    margin-top: 24px;
    padding-left: 2px;
    display: flex;
    align-items: center;
    justify-content: center;
    gap: 7.5px;
    background: #337ab7;
    border: 1px solid #2e6da4;
    border-radius: 6px;
    color: #fff;
    font-size: 22px;
}

/* Right side */
.scrollbar {
    width: 20px;
    padding: 460px 0 0 7px;
    background: #f0f0f0;
}

.thumb {
    width: 6px;
    height: 29px;
    background: #858585;
}

.right-strip {
    width: 23px;
    padding-left: 6px;
    padding-bottom: 2px;
    display: flex;
    align-items: center;
    background: var(--strip);
    border-left: 1px solid var(--line);
    border-right: 1px solid var(--line);
}

.tool-pane {
    width: 57px;
    padding-top: 13px;
    padding-right: 2px;
    display: flex;
    flex-direction: column;
    align-items: center;
    gap: 27px;
    background: var(--chrome);
}

.tool-pane svg {
    width: 30px;
    height: 30px;
}

.pane-line {
    width: 35px;
    height: 1px;
    margin: -13px 0 -14px;
    background: var(--line);
}

.pane-line.last {
    margin: -8px 0 -13px;
}

.teal { color: #1c979d; }
.pink { color: #db3b92; }
.red { color: #e34850; }
.indigo { color: #6767ec; }
.green { color: #85d044; }
.magenta { color: #c038cc; }
.violet { color: #9256d9; }
.gold { color: #dfbf00; }

/* Taskbar */
.taskbar {
    height: 60px;
    display: flex;
    align-items: center;
    background: linear-gradient(90deg, #d6e1e9, #d3e3ea 45%, #cfe2ea 82%, #d8dfe7);
    border-top: 1px solid #aab4ba;
}

.apps {
    display: flex;
    margin-left: 657px;
    gap: 7px;
}

.app {
    width: 48px;
    height: 48px;
    display: flex;
    align-items: center;
    justify-content: center;
    padding-bottom: 2px;
    border-radius: 4px;
    position: relative;
}

.app:first-child {
    margin-left: 3.5px;
    margin-right: 1px;
}

.app svg {
    width: 32px;
    height: 32px;
}

.app .profile {
    position: absolute;
    right: 3px;
    top: 0;
    width: 20px;
    height: 20px;
}

.app.open::after,
.app.current::after {
    content: "";
    position: absolute;
    bottom: 0;
    left: 20px;
    width: 8px;
    height: 4px;
    border-radius: 2px;
    background: #7c8489;
}

.app.current {
    background: #ebf1f5;
    box-shadow: 4px 0 0 -1px #e1ebf0, 0 1px 1px #b9c6cd;
}

.app.current::after {
    left: 14px;
    width: 20px;
    background: #0078d4;
}

.tray {
    margin-left: auto;
    padding-right: 26px;
    padding-bottom: 2px;
    display: flex;
    align-items: center;
    font-size: 14px;
    line-height: 20px;
    color: #1b1b1b;
}

.keyboard {
    margin: 0 22px 0 21px;
}

.lang {
    width: 30px;
    text-align: center;
    letter-spacing: 0.3px;
}

.wifi {
    margin-left: 21px;
}

.volume {
    margin-left: 7px;
}

.battery {
    margin-left: 8px;
}

.clock {
    width: 90px;
    margin: 0 10px 0 8px;
    text-align: right;
    letter-spacing: 0.15px;
    white-space: nowrap;
}
```
